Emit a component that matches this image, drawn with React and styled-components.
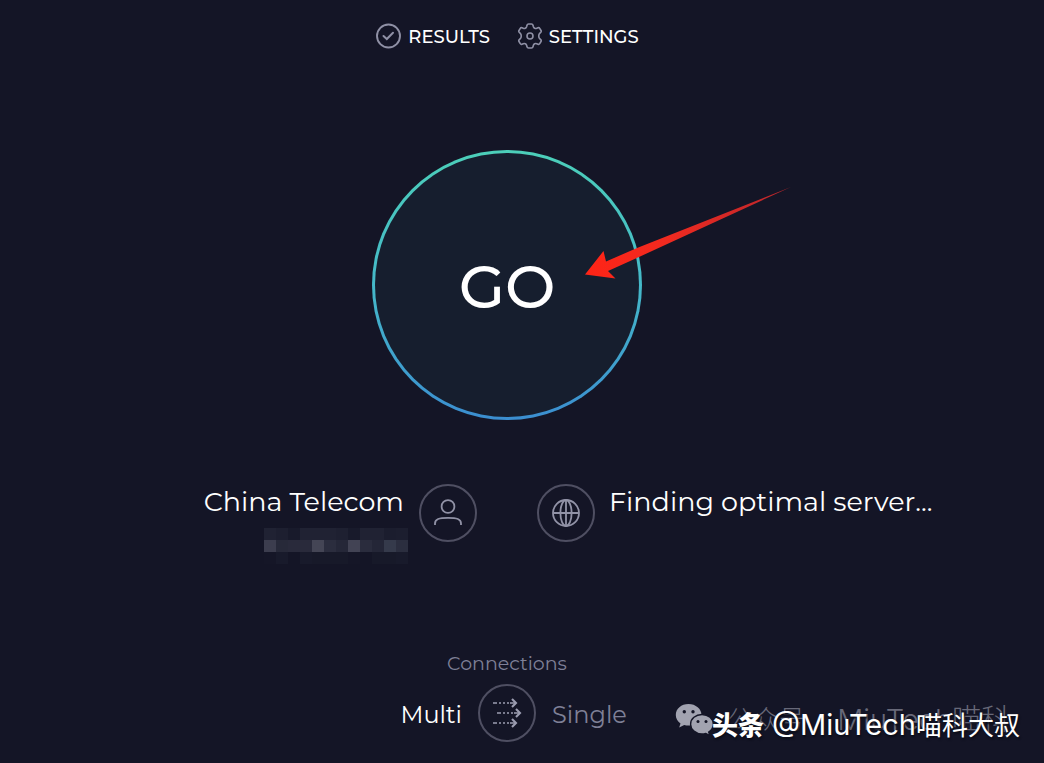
import styled, { createGlobalStyle } from "styled-components";

const GlobalStyle = createGlobalStyle`
  * {
    box-sizing: border-box;
  }
  body {
    margin: 0;
    background: #141526;
    color: white;
    font-family: Montserrat, Inter, "Noto Sans CJK SC", sans-serif;
  }
  button {
    padding: 0;
    border: none;
    background: none;
    color: inherit;
    font-family: inherit;
    cursor: pointer;
  }
`;

const Page = styled.div`
  position: relative;
  min-height: 100vh;
  padding: 22px 30px 20px 0;
  display: flex;
  flex-direction: column;
  align-items: center;
`;

const Nav = styled.nav`
  display: flex;
  gap: 27px;
`;

const NavLink = styled.a`
  display: flex;
  align-items: center;
  gap: 7px;
  height: 28px;
  color: white;
  font-size: 18px;
  font-weight: 500;
  text-decoration: none;
`;

const NavText = styled.span`
  padding-top: 2px;
`;

const GoArea = styled.div`
  position: relative;
  margin-top: 100px;
`;

const GoButton = styled.button`
  display: flex;
  align-items: center;
  justify-content: center;
  width: 270px;
  height: 270px;
  padding-top: 2px;
  border: 3px solid transparent;
  border-radius: 50%;
  background:
    linear-gradient(#161e2e, #161e2e) padding-box,
    linear-gradient(#4ccfb9, #45b9c9 50%, #3b8ed0) border-box;
  font-size: 60px;
  font-weight: 500;
`;

const Arrow = styled.svg`
  position: absolute;
  left: 212px;
  top: 36px;
  pointer-events: none;
`;

const Hosts = styled.div`
  display: grid;
  grid-template-columns: 1fr 1fr;
  gap: 60px;
  width: 100%;
  margin-top: 64px;
`;

const Host = styled.div`
  display: flex;
  align-items: flex-start;
  justify-content: ${(props) => (props.$end ? "flex-end" : "flex-start")};
  gap: ${(props) => (props.$end ? "11px" : "14px")};
`;

const HostInfo = styled.div`
  display: flex;
  flex-direction: column;
  align-items: flex-end;
`;

const HostName = styled.div`
  padding-right: 4px;
  font-size: 27px;
  line-height: 36px;
  white-space: nowrap;
`;

const Mosaic = styled.div`
  display: grid;
  grid-template-columns: repeat(12, 12px);
  grid-auto-rows: 12px;
  margin-top: 8px;
`;

const Cell = styled.span`
  background: ${(props) => props.$color};
`;

const Round = styled.span`
  display: flex;
  flex-shrink: 0;
  align-items: center;
  justify-content: center;
  width: 58px;
  height: 58px;
  border: 2px solid #4f4f62;
  border-radius: 50%;
`;

const Connections = styled.section`
  width: 100%;
  margin-top: 88px;
`;

const ConnectionsTitle = styled.div`
  color: #7f8097;
  font-size: 19px;
  line-height: 24px;
  text-align: center;
`;

const Modes = styled.div`
  display: grid;
  grid-template-columns: 1fr auto 1fr;
  align-items: center;
  gap: 16px;
  margin-top: 8px;
`;

const Mode = styled.button`
  justify-self: ${(props) => (props.$end ? "end" : "start")};
  padding-top: 4px;
  color: ${(props) => (props.$active ? "white" : "#7f8097")};
  font-size: 24px;
  line-height: 32px;
`;

const Watermark = styled.div`
  position: absolute;
  right: 24px;
  bottom: 15px;
  display: grid;
  align-items: center;
  font-family: Inter, "Noto Sans CJK SC", sans-serif;
  font-size: 29px;
  line-height: 32px;
  white-space: nowrap;
  pointer-events: none;
`;

const Account = styled.div`
  grid-area: 1 / 1;
  justify-self: end;
  display: flex;
  align-items: center;
  gap: 12px;
  padding: 0 10px 12px 0;
  color: #686979;
  font-weight: 300;
`;

const Author = styled.div`
  grid-area: 1 / 1;
  justify-self: end;
  display: flex;
  align-items: baseline;
  gap: 8px;
  color: white;
  text-shadow: 1px 2px 2px #0b0c16;
`;

const Han = styled.span`
  font-size: 26px;
  font-weight: ${(props) => (props.$bold ? 900 : "inherit")};
`;

const mosaicColors = [
  "#202233 #1d1f30 #181a2b #202233 #202233 #202233 #1e2031 #181a2b #202233 #202233 #1b1d2e #1c1e2f",
  "#3c3d4e #272939 #292a3b #292a3b #444555 #2b2d3e #252738 #424354 #2a2c3d #242637 #353a4b #2b2e3f",
  "#151627 #181a2b #141526 #181a2b #171929 #171929 #171929 #151627 #141526 #171929 #171929 #181a2b",
].flatMap((row) => row.split(" "));

function CheckIcon() {
  return (
    <svg width="26" height="26" viewBox="0 0 26 26" fill="none" stroke="#8f90a5">
      <circle cx="13.5" cy="13" r="11.5" strokeWidth="1.9" />
      <path d="M8.5 13l3.3 3 6.2-6.3" strokeWidth="2" strokeLinecap="round" />
    </svg>
  );
}

function GearIcon() {
  return (
    <svg width="25" height="26" viewBox="0 0 25 26" fill="none" stroke="#8f90a5" strokeWidth="1.6" strokeLinejoin="round">
      <path d="M11.5 1h3q1.200 0 1.500 1.200l.4 1.500q.3 1 1.300 1.500t2 .1l1.300-.6q1.100-.4 1.700.6l1.300 2.200q.6 1-.3 1.900l-1 .9q-.9.8-.9 2.200v1q0 1.400.9 2.200l1 .9q.9.900.3 1.900l-1.300 2.200q-.6 1-1.700.6l-1.300-.6q-1-.4-2 .1t-1.300 1.500l-.4 1.500Q15.700 25 14.500 25h-3q-1.200 0-1.500-1.200l-.4-1.500q-.3-1-1.300-1.500t-2-.1l-1.300.6q-1.100.4-1.700-.6L2 18.500q-.6-1 .3-1.900l1-.9q.9-.8.9-2.200v-1q0-1.400-.9-2.200l-1-.9Q1.400 8.500 2 7.500l1.300-2.200q.6-1 1.700-.6l1.300.6q1 .4 2-.1t1.300-1.500l.4-1.500Q10.300 1 11.500 1z" />
      <circle cx="13" cy="13" r="3" />
    </svg>
  );
}

function UserIcon() {
  return (
    <svg width="28" height="28" viewBox="0 0 28 28" fill="none" stroke="#9192a6" strokeWidth="1.8">
      <circle cx="14" cy="7.5" r="6.4" />
      <path d="M1 26v-1.5C1 20 5 18.8 14 18.8S27 20 27 24.5V26" />
    </svg>
  );
}

function GlobeIcon() {
  return (
    <svg width="28" height="28" viewBox="0 0 28 28" fill="none" stroke="#9192a6" strokeWidth="1.8">
      <circle cx="14" cy="14" r="13" />
      <ellipse cx="14" cy="14" rx="5.6" ry="13" />
      <path d="M1 14h26M14 1v26" />
    </svg>
  );
}

function MultiIcon() {
  const arrows = [
    [1, 5],
    [5, 15],
    [1, 25],
  ];
  return (
    <svg width="30" height="30" viewBox="0 0 30 30" fill="none" stroke="#9c9db1" strokeWidth="1.7">
      {arrows.map(([x, y]) => (
        <g key={y} transform={`translate(${x} ${y})`}>
          <path d="M0 0h4M6 0h2M10 0h2M14 0h2M17 0h6" />
          <path d="M19 -4l4 4-4 4" strokeWidth="2.1" />
        </g>
      ))}
    </svg>
  );
}

function WechatIcon() {
  return (
    <svg width="40" height="33" viewBox="0 0 40 33">
      <path d="M13.5 1C6.3 1 .8 5.8.8 11.9c0 3.5 1.8 6.5 4.7 8.5l-1.3 4.1 5-2.6c1.4.4 2.8.6 4.3.6 7.2 0 13-4.7 13-10.6S20.7 1 13.5 1z" fill="#a2a3b0" />
      <path d="M27 11.5c-6.3 0-11.4 4.3-11.4 9.7S20.7 31 27 31c1.3 0 2.6-.2 3.8-.6l4 2.2-1.1-3.5c2.8-1.8 4.6-4.7 4.6-7.9 0-5.4-5-9.7-11.3-9.7z" fill="#a2a3b0" stroke="#141526" strokeWidth="1.4" />
      <g fill="#141526">
        <circle cx="9.3" cy="8.8" r="1.7" />
        <circle cx="18" cy="8.8" r="1.7" />
        <circle cx="23" cy="18.5" r="1.5" />
        <circle cx="31" cy="18.5" r="1.5" />
      </g>
    </svg>
  );
}

export default function App() {
  return (
    <>
      <GlobalStyle />
      <Page>
        <Nav>
          <NavLink href="#results">
            <CheckIcon />
            <NavText>RESULTS</NavText>
          </NavLink>
          <NavLink href="#settings">
            <GearIcon />
            <NavText>SETTINGS</NavText>
          </NavLink>
        </Nav>

        <GoArea>
          <GoButton>GO</GoButton>
          <Arrow width="210" height="96" viewBox="0 0 210 96">
            <defs>
              <linearGradient id="tail" x1="0" x2="1" y1="0" y2="0">
                <stop offset="0" stopColor="#ff2416" />
                <stop offset="0.4" stopColor="#f02a20" />
                <stop offset="1" stopColor="#b8262c" />
              </linearGradient>
            </defs>
            <path d="M1 88.5L19.5 65l2.500 10.500L53 62 207 1 55 71 24 85l7.500 7.500z" fill="url(#tail)" />
          </Arrow>
        </GoArea>

        <Hosts>
          <Host $end>
            <HostInfo>
              <HostName>China Telecom</HostName>
              <Mosaic>
                {mosaicColors.map((color, i) => (
                  <Cell key={i} $color={color} />
                ))}
              </Mosaic>
            </HostInfo>
            <Round>
              <UserIcon />
            </Round>
          </Host>
          <Host>
            <Round>
              <GlobeIcon />
            </Round>
            <HostName>Finding optimal server...</HostName>
          </Host>
        </Hosts>

        <Connections>
          <ConnectionsTitle>Connections</ConnectionsTitle>
          <Modes>
            <Mode $end $active>
              Multi
            </Mode>
            <Round as="button" aria-label="Switch connections">
              <MultiIcon />
            </Round>
            <Mode>Single</Mode>
          </Modes>
        </Connections>

        <Watermark>
          <Account>
            <WechatIcon />
            <Han>公众号</Han>
            <span>·</span>
            <span>MiuTech喵科</span>
          </Account>
          <Author>
            <Han $bold>头条</Han>
            <span>
              @MiuTech<Han>喵科大叔</Han>
            </span>
          </Author>
        </Watermark>
      </Page>
    </>
  );
}
